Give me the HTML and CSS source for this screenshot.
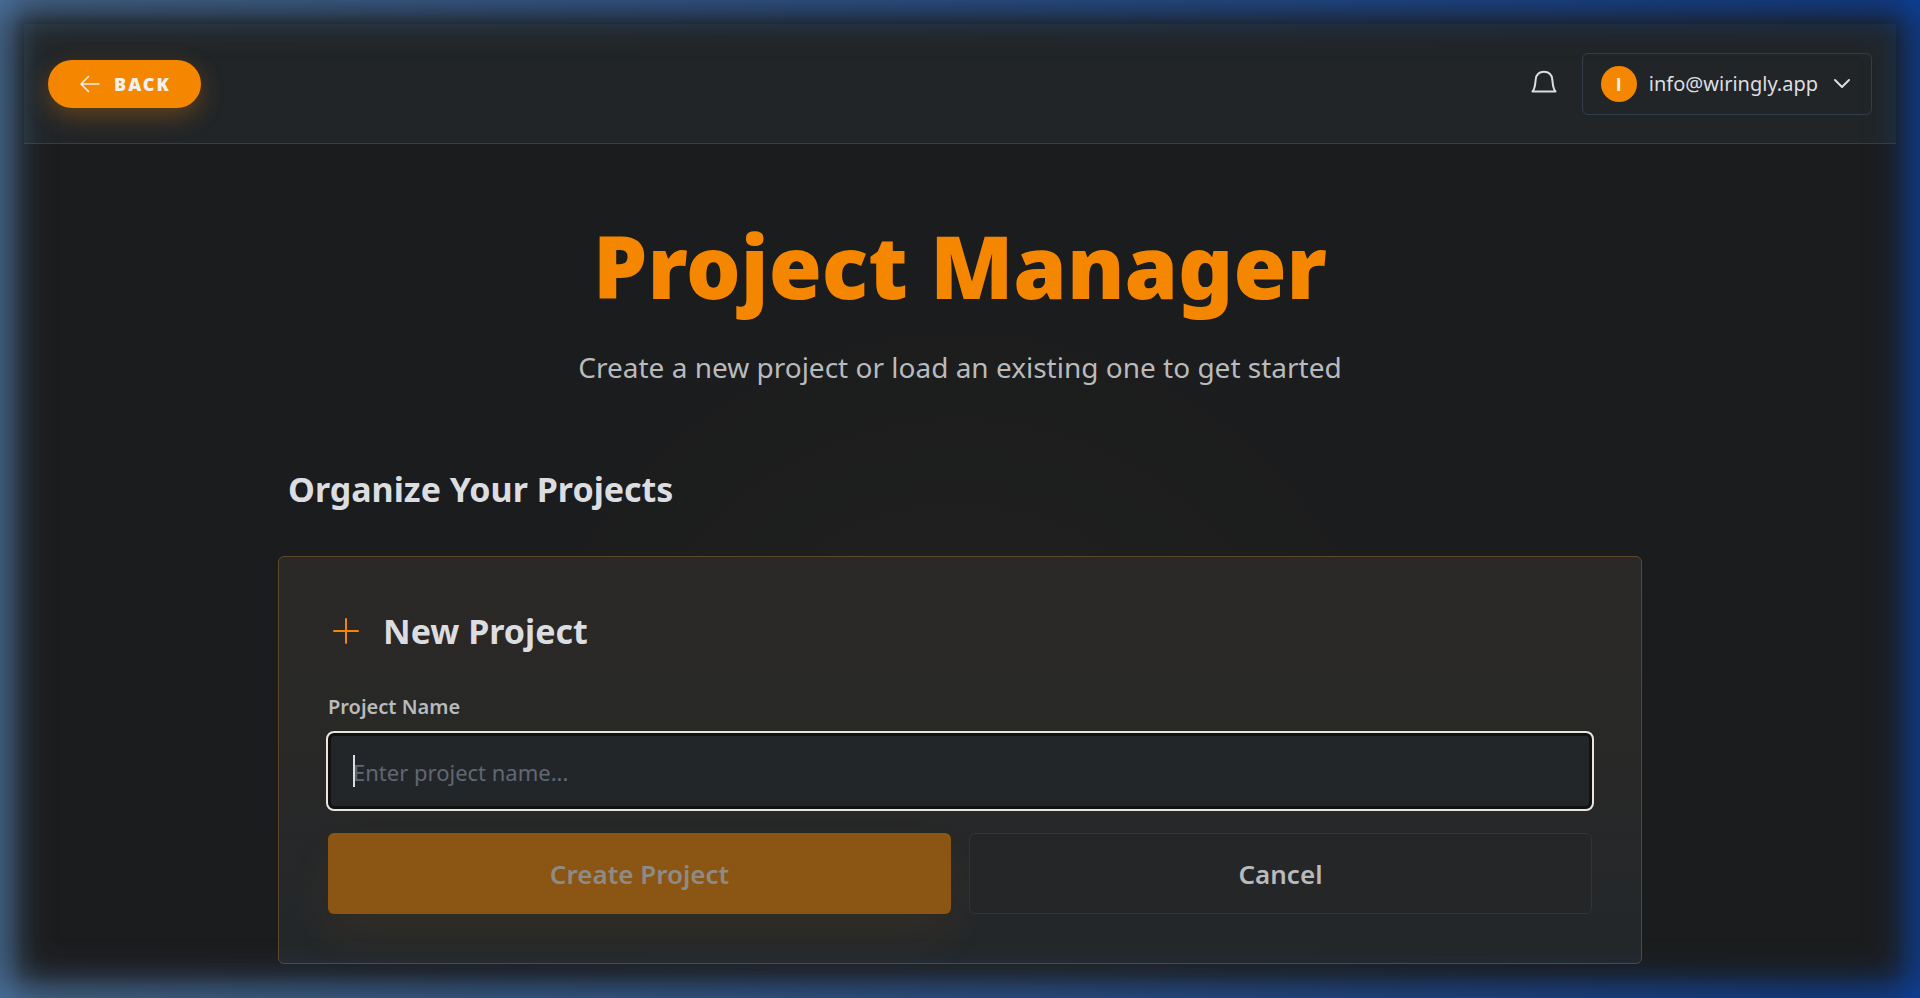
FILE: index.html
```html
<!DOCTYPE html>
<html lang="en">
<head>
<meta charset="utf-8">
<title>Project Manager</title>
<link rel="stylesheet" href="styles.css">
</head>
<body>
<div class="page">
  <header class="topbar">
    <button class="back" type="button">
      <svg class="back-icon" viewBox="0 0 20 18" fill="none" stroke="currentColor" stroke-width="1.5" stroke-linecap="round" stroke-linejoin="round" aria-hidden="true"><path d="M19 9H1M8.500 1.500 1 9l7.500 7.500"/></svg>
      <span>BACK</span>
    </button>
    <div class="topbar-right">
      <button class="bell" type="button" aria-label="Notifications">
        <svg viewBox="0 0 28 28" fill="none" stroke="currentColor" stroke-width="2" stroke-linecap="round" stroke-linejoin="round" aria-hidden="true"><path d="M2.500 21.500h23C22.800 18.500 22.900 14 22.300 9.500 21.700 4.500 18.500 1.800 14 1.800S6.300 4.500 5.700 9.500C5.100 14 5.200 18.500 2.500 21.500Z"/></svg>
      </button>
      <button class="user" type="button">
        <span class="avatar">I</span>
        <span class="email">info@wiringly.app</span>
        <svg class="chevron" viewBox="0 0 18 12" fill="none" stroke="currentColor" stroke-width="2" stroke-linecap="round" stroke-linejoin="round" aria-hidden="true"><path d="m2 2 7 7 7-7"/></svg>
      </button>
    </div>
  </header>
  <main class="content">
    <h1 class="title">Project Manager</h1>
    <p class="subtitle">Create a new project or load an existing one to get started</p>
    <h2 class="section-title">Organize Your Projects</h2>
    <form class="card">
      <h3 class="card-title">
        <svg class="plus" viewBox="0 0 26 26" fill="none" stroke="currentColor" stroke-width="2" stroke-linecap="round" aria-hidden="true"><path d="M13 1v24M1 13h24"/></svg>
        <span>New Project</span>
      </h3>
      <label class="label" for="project-name">Project Name</label>
      <div class="field">
        <input class="input" id="project-name" type="text" placeholder="Enter project name...">
      </div>
      <div class="actions">
        <button class="btn create" type="submit" disabled>Create Project</button>
        <button class="btn cancel" type="button">Cancel</button>
      </div>
    </form>
  </main>
</div>
<div class="edge-glow" aria-hidden="true"></div>
</body>
</html>
```
FILE: styles.css
```css
*, *::before, *::after { box-sizing: border-box; }

body {
  margin: 0;
  background: #1b1c1d;
  color: #dcdde1;
  font-family: "Noto Sans", "Open Sans", sans-serif;
}

button, input { font: inherit; color: inherit; }
h1, h2, h3, p { margin: 0; }

.page {
  min-height: 100vh;
  padding: 24px;
  background: radial-gradient(circle 500px at 50% 770px, rgba(200, 160, 90, 0.04), transparent);
}

.topbar {
  display: flex;
  align-items: center;
  justify-content: space-between;
  height: 120px;
  padding: 0 24px;
  background: #212527;
  border-bottom: 1px solid #333d4c;
}

.back {
  display: flex;
  align-items: center;
  gap: 14px;
  height: 48px;
  padding: 0 30px 0 32px;
  border: 0;
  border-radius: 24px;
  background: #f58600;
  color: #f3f1ee;
  font-size: 18px;
  font-weight: 900;
  letter-spacing: 2px;
  box-shadow: 0 8px 24px rgba(245, 134, 0, 0.3);
}
.back-icon { width: 20px; height: 18px; }

.topbar-right { display: flex; align-items: center; gap: 24px; }

.bell { display: flex; padding: 0; border: 0; background: none; }
.bell svg { width: 28px; height: 28px; }

.user {
  display: flex;
  align-items: center;
  gap: 12px;
  height: 62px;
  padding: 0 20px 0 18px;
  border: 1px solid #333d4c;
  border-radius: 6px;
  background: transparent;
  font-size: 20px;
}
.avatar {
  display: flex;
  align-items: center;
  justify-content: center;
  width: 36px;
  height: 36px;
  border-radius: 50%;
  background: #f58600;
  color: #f3f1ee;
  font-family: "Open Sans", "Noto Sans", sans-serif;
  font-size: 18px;
  font-weight: 700;
}
.chevron { width: 18px; height: 12px; margin-left: 3px; }

.content {
  max-width: 1364px;
  margin: 0 auto;
  padding-top: 62px;
}

.title {
  color: #f58600;
  font-size: 86px;
  font-weight: 900;
  line-height: 120px;
  text-align: center;
}
.subtitle {
  margin-top: 17px;
  color: #b9babc;
  font-size: 28px;
  line-height: 48px;
  text-align: center;
}
.section-title {
  margin: 72px 10px 0;
  font-size: 34px;
  font-weight: 700;
  line-height: 52px;
}

.card {
  margin-top: 41px;
  padding: 48px 49px 49px;
  border: 1px solid #5f472b;
  border-radius: 6px;
  background: linear-gradient(#2a2927, #282827 50%, #23272a);
}
.card-title {
  display: flex;
  align-items: center;
  gap: 24px;
  padding-left: 5px;
  font-size: 34px;
  font-weight: 700;
  line-height: 52px;
}
.plus { width: 26px; height: 26px; color: #f58600; }

.label {
  display: block;
  margin-top: 36px;
  color: #b9babc;
  font-size: 20px;
  font-weight: 600;
  line-height: 28px;
}

.field { position: relative; margin-top: 12px; }
.field::after {
  content: "";
  position: absolute;
  top: 22px;
  left: 25px;
  width: 2px;
  height: 32px;
  background: #dcdde1;
}
.input {
  display: block;
  width: 100%;
  height: 76px;
  padding: 2px 22px 0;
  border: 3px solid #101112;
  border-radius: 6px;
  background: #222629;
  font-size: 22px;
  outline: 2px solid #ece5dc;
}
.input::placeholder { color: #626774; opacity: 1; }

.actions {
  display: grid;
  grid-template-columns: 1fr 1fr;
  gap: 18px;
  margin-top: 24px;
}
.btn {
  height: 81px;
  border-radius: 6px;
  font-size: 26px;
  font-weight: 600;
}
.create {
  border: 0;
  background: #8b5613;
  color: #8e8b86;
  box-shadow: 0 24px 48px rgba(245, 134, 0, 0.07);
}
.cancel {
  border: 1px solid #2e3540;
  background: #242628;
  color: #b9babc;
}

.edge-glow {
  position: fixed;
  inset: 0;
  pointer-events: none;
  background: linear-gradient(90deg, #4a709a, #0c409a);
  --fade: rgba(0, 0, 0, 0.72), rgba(0, 0, 0, 0.52) 12px, rgba(0, 0, 0, 0.22) 24px, rgba(0, 0, 0, 0.07) 36px, rgba(0, 0, 0, 0.02) 46px, transparent 60px;
  -webkit-mask-image:
    linear-gradient(to right, var(--fade)),
    linear-gradient(to left, var(--fade)),
    linear-gradient(to bottom, var(--fade)),
    linear-gradient(to top, var(--fade));
  mask-image:
    linear-gradient(to right, var(--fade)),
    linear-gradient(to left, var(--fade)),
    linear-gradient(to bottom, var(--fade)),
    linear-gradient(to top, var(--fade));
}
```
